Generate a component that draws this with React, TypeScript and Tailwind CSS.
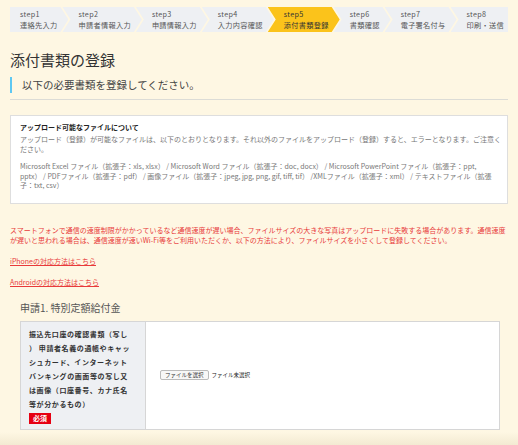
import React from "react";

const steps: [string, string][] = [
  ["step1", "連絡先入力"],
  ["step2", "申請者情報入力"],
  ["step3", "申請情報入力"],
  ["step4", "入力内容確認"],
  ["step5", "添付書類登録"],
  ["step6", "書類確認"],
  ["step7", "電子署名付与"],
  ["step8", "印刷・送信"],
];

function Step({ i, label, title }: { i: number; label: string; title: string }) {
  const active = i === 4;
  const first = i === 0;
  const last = i === steps.length - 1;
  const shape = first
    ? "pl-[10px] pr-[11px] [clip-path:polygon(0_0,calc(100%_-_8px)_0,100%_50%,calc(100%_-_8px)_100%,0_100%)]"
    : last
    ? "-ml-[6px] pl-[16px] flex-1 [clip-path:polygon(0_0,100%_0,100%_100%,0_100%,8px_50%)]"
    : "-ml-[6px] pl-[16px] pr-[11px] [clip-path:polygon(0_0,calc(100%_-_8px)_0,100%_50%,calc(100%_-_8px)_100%,0_100%,8px_50%)]";
  const color = active ? "bg-[#fbc31b] text-[#333]" : "bg-[#eef0f3] text-[#555]";
  return (
    <div className={`flex flex-col justify-center h-[25px] text-[7.2px] leading-[11px] tracking-[0.3px] whitespace-nowrap ${shape} ${color}`}>
      <span>{label}</span>
      <span>{title}</span>
    </div>
  );
}

const leftLines = [
  "振込先口座の確認書類（写し",
  "） 申請者名義の通帳やキャッ",
  "シュカード、インターネット",
  "バンキングの画面等の写し又",
  "は画像（口座番号、カナ氏名",
  "等が分かるもの）",
];

export default function App() {
  return (
    <div className="w-[518px] h-[445px] overflow-hidden bg-[#fef7e3] flex flex-col font-['Noto_Sans_CJK_JP','Noto_Sans',sans-serif] text-[#333]">
      <div className="mt-[7px] mx-[10px] flex h-[25px]">
        {steps.map(([l, t], i) => (
          <Step key={l} i={i} label={l} title={t} />
        ))}
      </div>

      <h1 className="mt-[18px] mx-[10px] text-[15px] leading-[20px] text-[#333]">添付書類の登録</h1>

      <div className="mt-[7px] mx-[10px] border-l-2 border-[#5ec8f2] pl-[10px] h-[16px] flex items-center text-[10.5px] text-[#444]">
        以下の必要書類を登録してください。
      </div>

      <div className="mt-[6px] mx-[10px] h-px bg-[#dcdcd6]" />

      <div className="mt-[15px] mx-[10px] border border-[#dedede] bg-white px-[9px] pt-[6px] pb-[12px] text-[7px]">
        <div className="font-bold leading-[10px] text-[#222]">アップロード可能なファイルについて</div>
        <div className="mt-[3px] leading-[9.5px] text-[#777] whitespace-nowrap">
          アップロード（登録）が可能なファイルは、以下のとおりとなります。それ以外のファイルをアップロード（登録）すると、エラーとなります。ご注意く
          <br />
          ださい。
        </div>
        <div className="mt-[8px] leading-[9.5px] text-[#777] whitespace-nowrap">
          Microsoft Excel ファイル（拡張子：xls, xlsx） / Microsoft Word ファイル（拡張子：doc, docx） / Microsoft PowerPoint ファイル（拡張子：ppt,
          <br />
          pptx） / PDFファイル（拡張子：pdf） / 画像ファイル（拡張子：jpeg, jpg, png, gif, tiff, tif） /XMLファイル（拡張子：xml） / テキストファイル（拡張
          <br />
          子：txt, csv）
        </div>
      </div>

      <div className="mt-[21px] mx-[10px] text-[7px] leading-[10px] text-[#e83a3a] whitespace-nowrap">
        スマートフォンで通信の速度制限がかかっているなど通信速度が遅い場合、ファイルサイズの大きな写真はアップロードに失敗する場合があります。通信速度
        <br />
        が遅いと思われる場合は、通信速度が速いWi-Fi等をご利用いただくか、以下の方法により、ファイルサイズを小さくして登録してください。
      </div>

      <div className="mt-[11px] mx-[10px] text-[7px] leading-[10px]">
        <a className="text-[#e83a3a] underline">iPhoneの対応方法はこちら</a>
      </div>
      <div className="mt-[11px] mx-[10px] text-[7px] leading-[10px]">
        <a className="text-[#e83a3a] underline">Androidの対応方法はこちら</a>
      </div>

      <h2 className="mt-[13px] ml-[20px] text-[10px] leading-[16px] text-[#555]">申請1. 特別定額給付金</h2>

      <div className="mt-[5px] mx-[20px] w-[480px] border border-[#d6d6d6] flex">
        <div className="w-[125px] shrink-0 bg-[#eef0f3] border-r border-[#d6d6d6] px-[8px] pt-[5px] pb-[5px]">
          {leftLines.map((l) => (
            <div key={l} className="text-[7px] leading-[14px] font-semibold tracking-[0.6px] whitespace-nowrap text-[#333]">
              {l}
            </div>
          ))}
          <div className="mt-[2px] w-fit bg-[#e60012] text-white text-[7px] font-bold px-[4px] h-[11px] leading-[11px]">
            必須
          </div>
        </div>
        <div className="flex-1 bg-white flex items-center pl-[14px]">
          <span className="border border-[#bbb] rounded-[2px] bg-[#f7f7f7] text-[5.5px] leading-[8px] px-[4px] text-[#333]">
            ファイルを選択
          </span>
          <span className="ml-[3px] text-[5.5px] leading-[8px] text-[#222]">ファイル未選択</span>
        </div>
      </div>

      <div className="flex-1 mt-[2px] bg-gradient-to-b from-[#fef7e3] to-[#f3ead2]" />
    </div>
  );
}
